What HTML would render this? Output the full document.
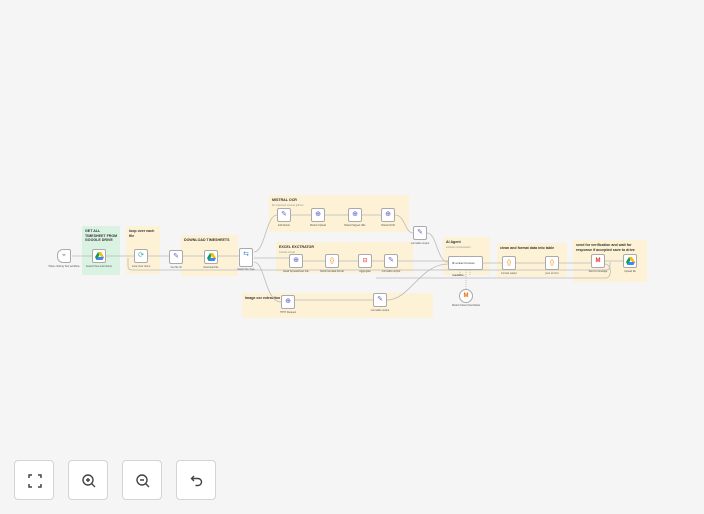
<!DOCTYPE html><html><head><style>
body{margin:0;width:704px;height:514px;overflow:hidden;background:#f5f5f5;font-family:"Liberation Sans",sans-serif;position:relative}
.s{position:absolute;background:#fdf1d6;border-radius:2px}
.s b{position:absolute;left:3px;top:3px;right:2px;font-size:3.6px;color:#333;line-height:4.6px}
.s i{position:absolute;left:3px;font-style:normal;font-size:2.4px;color:#888}
.n{position:absolute;width:14px;height:14px;background:#fff;border:1px solid #aaa;border-radius:2px;box-sizing:border-box;font-size:7px;line-height:12px;text-align:center}
.l{position:absolute;font-size:2.5px;color:#555;width:40px;margin-left:-13px;text-align:center}
.btn{position:absolute;top:460px;width:40px;height:40px;background:#fff;border:1px solid #d4d4d4;border-radius:4px;box-sizing:border-box}
.btn svg{position:absolute;left:12px;top:12px}
</style></head><body>
<div class="s" style="left:82px;top:226px;width:38px;height:49px;background:#d9f2e1"><b>GET ALL TIMESHEET FROM GOOGLE DRIVE</b></div>
<div class="s" style="left:126px;top:226px;width:34px;height:48px"><b>loop over each file</b></div>
<div class="s" style="left:181px;top:235px;width:57px;height:41px"><b>DOWNLOAD TIMESHEETS</b></div>
<div class="s" style="left:269px;top:195px;width:140px;height:37px"><b>MISTRAL OCR</b><i style="top:9px">for xxxxxxxxx xxxxxxx pdf xxx</i></div>
<div class="s" style="left:276px;top:242px;width:137px;height:31px"><b>EXCEL EXCTRATOR</b><i style="top:9px">xxxxxxx xxxxxx</i></div>
<div class="s" style="left:242px;top:293px;width:191px;height:25px"><b>Image ocr extraction</b></div>
<div class="s" style="left:443px;top:237px;width:47px;height:38px"><b>AI Agent</b><i style="top:9px">xxxxxxxx xxxxxxxxxxxx</i></div>
<div class="s" style="left:497px;top:243px;width:70px;height:34px"><b>clean and format data into table</b></div>
<div class="s" style="left:573px;top:240px;width:74px;height:42px"><b>send for verification and wait for response if accepted save to drive</b></div>
<svg style="position:absolute;left:0;top:0" width="704" height="514" fill="none" stroke="#bbb" stroke-width="0.8">
<path d="M72 256H92M106 256H134M148 256H169M183 256H204M218 256H239"/>
<path d="M128 258V266Q128 270 132 270H606Q610 270 610 266V262"/>
<path d="M254 252C265 252 266 215 277 215M291 215H311M325 215H348M362 215H381M395 215C405 215 405 233 413 233M427 233C437 233 437 262 448 262"/>
<path d="M254 258H289M303 261H325M339 261H358M372 261H384M398 261H448"/>
<path d="M254 262C265 262 265 302 281 302M295 300H373M387 300C410 300 420 264 448 264"/>
<path d="M483 263H502M516 263H545M559 263H591M605 261H623M605 264C612 264 612 278 606 278H376"/>
<path d="M466 270V289M460 270V276M470 270V276" stroke-dasharray="1 1"/>
</svg>
<div class="n" style="left:57px;top:249px;border-radius:6px 2px 2px 6px;color:#999">⌖</div><div class="l" style="left:57px;top:265px">When clicking Test workflow</div>
<div class="n" style="left:92px;top:249px"><svg width="9" height="8" style="margin-top:2px"><path d="M3 0h3l3 5H6z" fill="#fbbc04"/><path d="M3 0L0 5l1.5 3L4.5 3z" fill="#0f9d58"/><path d="M1.5 8h6L9 5H3z" fill="#4285f4"/></svg></div><div class="l" style="left:92px;top:265px">Search files and folders</div>
<div class="n" style="left:134px;top:249px;color:#3a9">⟳</div><div class="l" style="left:134px;top:265px">Loop Over Items</div>
<div class="n" style="left:169px;top:250px;color:#66c">✎</div><div class="l" style="left:169px;top:266px">Get file ID</div>
<div class="n" style="left:204px;top:250px"><svg width="9" height="8" style="margin-top:2px"><path d="M3 0h3l3 5H6z" fill="#fbbc04"/><path d="M3 0L0 5l1.5 3L4.5 3z" fill="#0f9d58"/><path d="M1.5 8h6L9 5H3z" fill="#4285f4"/></svg></div><div class="l" style="left:204px;top:266px">Download file</div>
<div class="n" style="left:239px;top:248px;height:19px;color:#48c">⇆</div><div class="l" style="left:239px;top:268px">Switch file Type</div>
<div class="n" style="left:277px;top:208px;color:#66c">✎</div><div class="l" style="left:277px;top:224px">Edit Fields</div>
<div class="n" style="left:311px;top:208px;color:#55c">⊕</div><div class="l" style="left:311px;top:224px">Mistral Upload</div>
<div class="n" style="left:348px;top:208px;color:#55c">⊕</div><div class="l" style="left:348px;top:224px">Mistral Signed URL</div>
<div class="n" style="left:381px;top:208px;color:#55c">⊕</div><div class="l" style="left:381px;top:224px">Mistral OCR</div>
<div class="n" style="left:413px;top:226px;color:#66c">✎</div><div class="l" style="left:413px;top:242px">normalize output</div>
<div class="n" style="left:289px;top:254px;color:#55c">⊕</div><div class="l" style="left:289px;top:270px">Read Spreadsheet File</div>
<div class="n" style="left:325px;top:254px;color:#e80;font-size:6px">{}</div><div class="l" style="left:325px;top:270px">Reformat data format</div>
<div class="n" style="left:358px;top:254px;color:#e44;font-size:6px">⊟</div><div class="l" style="left:358px;top:270px">Aggregate</div>
<div class="n" style="left:384px;top:254px;color:#66c">✎</div><div class="l" style="left:384px;top:270px">normalize output</div>
<div class="n" style="left:281px;top:295px;color:#55c">⊕</div><div class="l" style="left:281px;top:311px">HTTP Request</div>
<div class="n" style="left:373px;top:293px;color:#66c">✎</div><div class="l" style="left:373px;top:309px">normalize output</div>
<div class="n" style="left:448px;top:256px;width:35px;font-size:3px;text-align:left;padding-left:3px;color:#333">⚙ extract human readable...</div>
<div class="n" style="left:502px;top:256px;color:#e80;font-size:6px">{}</div><div class="l" style="left:502px;top:272px">Format output</div>
<div class="n" style="left:545px;top:256px;color:#e80;font-size:6px">{}</div><div class="l" style="left:545px;top:272px">json to html</div>
<div class="n" style="left:591px;top:254px;color:#d33;font-size:6px;font-weight:bold">M</div><div class="l" style="left:591px;top:270px">Send a message</div>
<div class="n" style="left:623px;top:254px"><svg width="9" height="8" style="margin-top:2px"><path d="M3 0h3l3 5H6z" fill="#fbbc04"/><path d="M3 0L0 5l1.5 3L4.5 3z" fill="#0f9d58"/><path d="M1.5 8h6L9 5H3z" fill="#4285f4"/></svg></div><div class="l" style="left:623px;top:270px">Upload file</div>
<div class="n" style="left:459px;top:289px;border-radius:50%;color:#e60;font-size:6px;font-weight:bold">M</div><div class="l" style="left:459px;top:304px">Mistral Cloud Chat Model</div>
<div class="btn" style="left:14px"><svg width="16" height="16" fill="none" stroke="#444" stroke-width="1.5"><path d="M2 5V2h3M11 2h3v3M14 11v3h-3M5 14H2v-3"/></svg></div>
<div class="btn" style="left:68px"><svg width="16" height="16" fill="none" stroke="#444" stroke-width="1.4"><circle cx="7" cy="7" r="5"/><path d="M10.5 10.5l3.5 3.5M5 7h4M7 5v4"/></svg></div>
<div class="btn" style="left:122px"><svg width="16" height="16" fill="none" stroke="#444" stroke-width="1.4"><circle cx="7" cy="7" r="5"/><path d="M10.5 10.5l3.5 3.5M5 7h4"/></svg></div>
<div class="btn" style="left:176px"><svg width="16" height="16" fill="none" stroke="#444" stroke-width="1.4"><path d="M5 3L2.5 5.5 5 8M2.5 5.5h6.5a3.5 3.5 0 010 7H6.5"/></svg></div>
</body></html>
